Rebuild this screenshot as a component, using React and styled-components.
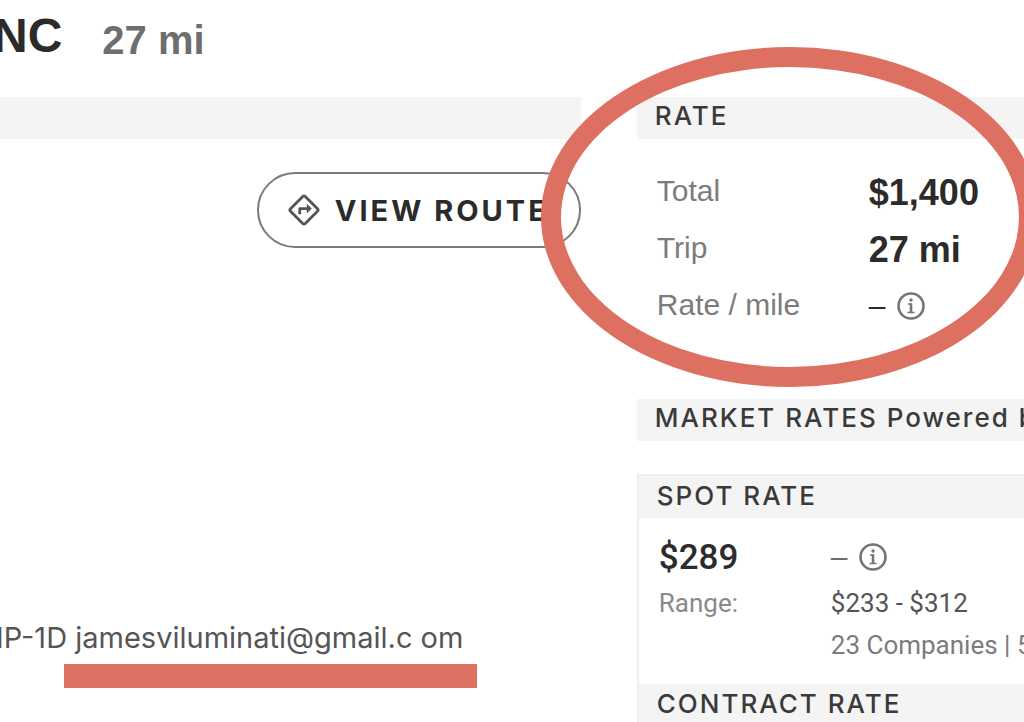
import React from 'react'
import styled, { createGlobalStyle } from 'styled-components'
import { MdOutlineDirections } from 'react-icons/md'

const marker = '#dd7060'

const GlobalStyle = createGlobalStyle`
	* {
		box-sizing: border-box;
	}
	body {
		margin: 0;
		background: #fff;
		color: #2b2b2b;
		font-family: Roboto, "Liberation Sans", sans-serif;
	}
`

function SectionBar({ title }) {
	return (
		<BarStyled>
			{title && <h2>{title}</h2>}
		</BarStyled>
	)
}

function InfoIcon() {
	return (
		<svg width="30" height="30" viewBox="0 0 30 30" fill="none" stroke="#757575" aria-hidden="true">
			<circle cx="15" cy="15" r="12.5" strokeWidth="2.6" />
			<path d="M12 13h4M11.500 21.500h7" strokeWidth="1.6" />
			<path d="M15 12.500v9" strokeWidth="2.600" />
			<circle cx="15" cy="9" r="1.7" fill="#757575" stroke="none" />
		</svg>
	)
}

function EmptyRate({ muted }) {
	return (
		<EmptyRateStyled $muted={muted}>
			<span>–</span>
			<InfoIcon />
		</EmptyRateStyled>
	)
}

function App() {
	return (
		<Page>
			<GlobalStyle />
			<Header>
				<h1>NC</h1>
				<Distance>27 mi</Distance>
			</Header>
			<Columns>
				<TripColumn>
					<SectionBar />
					<RouteButton type="button">
						<MdOutlineDirections size={34} />
						View route
					</RouteButton>
					<Comment>
						IP-1D <Marked>jamesviluminati@gmail.c om</Marked>
					</Comment>
				</TripColumn>
				<RateColumn>
					<RateSection>
						<SectionBar title="RATE" />
						<RateList>
							<dt>Total</dt>
							<dd><Amount>$1,400</Amount></dd>
							<dt>Trip</dt>
							<dd><Amount>27 mi</Amount></dd>
							<dt>Rate / mile</dt>
							<dd><EmptyRate /></dd>
						</RateList>
						<Ring />
					</RateSection>
					<SectionBar title="MARKET RATES Powered b" />
					<RateCard>
						<CardTitle>SPOT RATE</CardTitle>
						<CardBody>
							<Price>$289</Price>
							<EmptyRate muted />
							<RangeLabel>Range:</RangeLabel>
							<Range>$233 - $312</Range>
							<Source>23 Companies | 5</Source>
						</CardBody>
						<CardTitle>CONTRACT RATE</CardTitle>
					</RateCard>
				</RateColumn>
			</Columns>
		</Page>
	)
}

const Page = styled.main`
	height: 100vh;
	overflow: hidden;
`

const Header = styled.header`
	display: flex;
	align-items: flex-start;
	gap: 40px;
	height: 97px;
	padding-top: 8px;
	margin-left: -7px;
	font-family: "Liberation Sans", sans-serif;
	h1 {
		margin: 0;
		font-size: 48px;
		line-height: 56px;
	}
`

const Distance = styled.span`
	color: #6e6e6e;
	font-size: 40px;
	font-weight: 700;
	line-height: 64px;
`

const Columns = styled.div`
	display: grid;
	grid-template-columns: 3fr 2fr;
	column-gap: 56px;
`

const TripColumn = styled.section`
	display: flex;
	flex-direction: column;
	min-width: 0;
`

const RateColumn = styled.section`
	min-width: 0;
`

const BarStyled = styled.div`
	height: 42px;
	padding-left: 18px;
	background: #f4f4f4;
	overflow: hidden;
	h2 {
		margin: 0;
		color: #3a3a3a;
		font-family: Inter, sans-serif;
		font-size: 26px;
		font-weight: 500;
		line-height: 38px;
		letter-spacing: 2px;
		white-space: nowrap;
	}
`

const RouteButton = styled.button`
	display: flex;
	align-items: center;
	align-self: flex-end;
	gap: 14px;
	height: 76px;
	margin-top: 33px;
	padding: 0 30px 0 28px;
	border: 2px solid #7a7a7a;
	border-radius: 38px;
	background: #fff;
	color: #2b2b2b;
	font-family: Inter, sans-serif;
	font-size: 29px;
	font-weight: 700;
	letter-spacing: 3px;
	text-transform: uppercase;
	white-space: nowrap;
	svg {
		color: #555;
	}
`

const Comment = styled.p`
	margin: 372px 0 0 -4px;
	color: #555;
	font-family: Inter, sans-serif;
	font-size: 29px;
	line-height: 36px;
	white-space: nowrap;
`

const Marked = styled.span`
	position: relative;
	&::after {
		content: '';
		position: absolute;
		left: -11px;
		right: -14px;
		top: 44px;
		height: 24px;
		background: ${marker};
	}
`

const RateSection = styled.div`
	position: relative;
	padding-bottom: 65px;
`

/* highlight over the whole rate block */
const Ring = styled.div`
	position: absolute;
	top: -50px;
	left: -96px;
	width: 498px;
	height: 340px;
	border: 20px solid ${marker};
	border-radius: 50%;
	pointer-events: none;
`

const RateList = styled.dl`
	display: grid;
	grid-template-columns: 212px 1fr;
	grid-auto-rows: 57px;
	align-items: center;
	margin: 0;
	padding: 24px 0 0 20px;
	font-family: "Liberation Sans", sans-serif;
	dt {
		padding-bottom: 2px;
		color: #7c7c7c;
		font-size: 30px;
	}
	dd {
		margin: 0;
	}
`

const Amount = styled.strong`
	display: block;
	padding-top: 3px;
	font-size: 36px;
`

const EmptyRateStyled = styled.span`
	display: flex;
	align-items: center;
	gap: 11px;
	color: ${(props) => (props.$muted ? '#6e6e6e' : '#2b2b2b')};
	font-family: "Liberation Sans", sans-serif;
	font-size: 30px;
`

const RateCard = styled.article`
	margin-top: 33px;
	border: 2px solid #eee;
	border-right: 0;
`

const CardTitle = styled.h3`
	height: 42px;
	margin: 0;
	padding-left: 18px;
	background: #f4f4f4;
	color: #3a3a3a;
	font-family: Inter, sans-serif;
	font-size: 26px;
	font-weight: 500;
	line-height: 40px;
	letter-spacing: 2px;
	white-space: nowrap;
`

const CardBody = styled.div`
	display: grid;
	grid-template-columns: 172px 1fr;
	grid-template-rows: 50px 42px 42px;
	align-items: center;
	padding: 14px 0 18px 20px;
	white-space: nowrap;
`

const Price = styled.strong`
	font-size: 35px;
	font-weight: 500;
`

const RangeLabel = styled.span`
	color: #8a8a8a;
	font-size: 26px;
`

const Range = styled.span`
	color: #555;
	font-size: 26px;
`

const Source = styled.span`
	grid-column: 2;
	color: #7c7c7c;
	font-size: 26px;
`

export default App
